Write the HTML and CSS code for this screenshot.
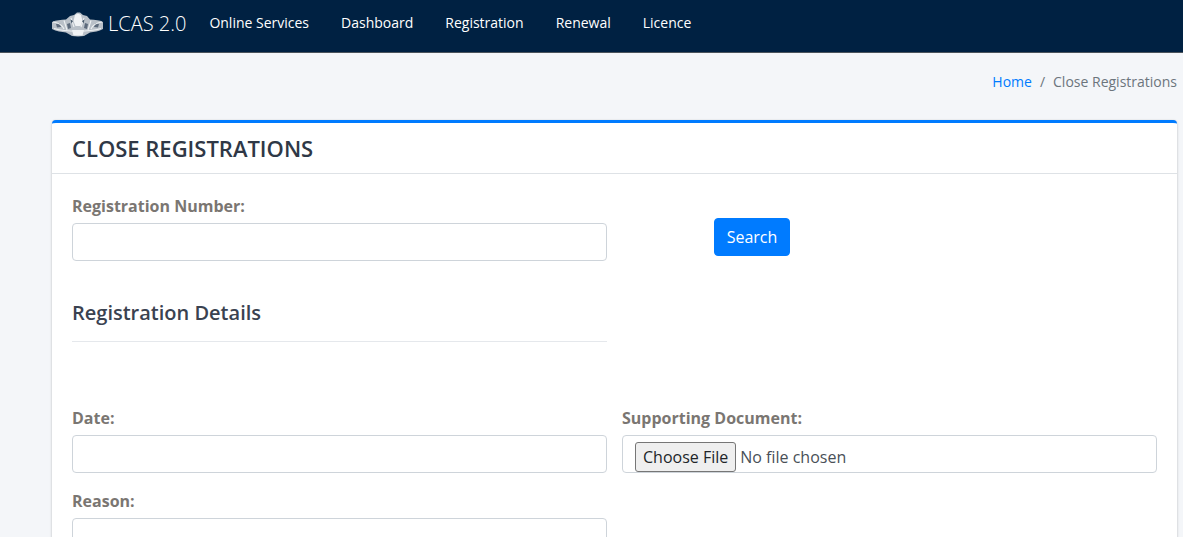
FILE: index.html
```html
<!DOCTYPE html>
<html lang="en">
<head>
<meta charset="utf-8">
<title>Close Registrations</title>
<link rel="stylesheet" href="styles.css">
</head>
<body>
<nav class="navbar">
  <a class="brand" href="#">
    <svg class="logo" width="52" height="26" viewBox="0 0 52 26" aria-hidden="true">
      <defs><filter id="soft" x="-5%" y="-5%" width="110%" height="110%"><feGaussianBlur stdDeviation="0.5"/></filter></defs>
      <g filter="url(#soft)">
        <path d="M0 10 C4 8 9 8 14 7.500 L18 4 L22 3 L25 .5 L28 .5 L31 3 L35 4 L38 7.500 C43 8 48 8 51 10 L51 17 C47 19.500 42 20 38 20.500 L32 24 L26 24.500 L20 24 L14 20.500 C10 20 4 19.500 0 17 Z" fill="#b9c0c8"/>
        <path d="M4 12 L8 11.500 L9 15 L5 15.500 Z M43 11.500 L47 12 L46 15.500 L42 15 Z M15 12 L18 11 L19 16 L16 17 Z M33 11 L36 12 L35 17 L32 16 Z" fill="#5d6b7c"/>
        <path d="M23 3 L26 1.500 L29 3 L30.500 9 L28.500 14 L23.500 14 L21.500 9 Z M20 18 L32 18 L30.500 23.500 L21.500 23.500 Z" fill="#f1f3f5"/>
        <path d="M1 10 C5 10.500 10 12 12 17 M50 10 C46 10.500 41 12 39 17 M12 8.500 L15 18 M39 8.500 L36 18 M19 6 L22 15 M32 6 L29 15 M2 16.500 C14 20 37 20 49 16.500" stroke="#eef1f3" stroke-width="1.100" fill="none"/>
        <path d="M18.500 7.500 L21 9 L19.500 11.500 Z M32.500 7.500 L30 9 L31.500 11.500 Z" fill="#46576a"/>
      </g>
    </svg>
    <span class="brand-text">LCAS 2.0</span>
  </a>
  <ul class="nav-links">
    <li><a href="#">Online Services</a></li>
    <li><a href="#">Dashboard</a></li>
    <li><a href="#">Registration</a></li>
    <li><a href="#">Renewal</a></li>
    <li><a href="#">Licence</a></li>
  </ul>
</nav>
<main class="content">
  <ol class="breadcrumb">
    <li><a href="#">Home</a></li>
    <li class="sep">/</li>
    <li class="current">Close Registrations</li>
  </ol>
  <section class="card">
    <header class="card-header"><h1>CLOSE REGISTRATIONS</h1></header>
    <div class="card-body">
      <div class="row row-search">
        <div class="field">
          <label for="regno">Registration Number:</label>
          <input id="regno" class="control" type="text">
        </div>
        <div class="search-cell"><button class="btn" type="button">Search</button></div>
      </div>
      <div class="row">
        <div class="details">
          <h2>Registration Details</h2>
          <hr>
        </div>
      </div>
      <div class="row row-date">
        <div class="field">
          <label for="date">Date:</label>
          <input id="date" class="control" type="text">
        </div>
        <div class="field">
          <label for="doc">Supporting Document:</label>
          <input id="doc" class="control file" type="file">
        </div>
      </div>
      <div class="row row-reason">
        <div class="field">
          <label for="reason">Reason:</label>
          <input id="reason" class="control" type="text">
        </div>
      </div>
    </div>
  </section>
</main>
</body>
</html>
```
FILE: styles.css
```css
* { box-sizing: border-box; }
html, body { height: 537px; overflow: hidden; }
body {
  margin: 0;
  background: #f4f6f9;
  font-family: "Open Sans", sans-serif;
  font-size: 16px;
  color: #212529;
}
a { text-decoration: none; }
.navbar {
  height: 53px;
  background: #002142;
  border-bottom: 1px solid #4b545c;
  display: flex;
  align-items: flex-start;
  padding-left: 52px;
}
.brand { display: flex; align-items: center; height: 50px; color: #fff; }
.logo { display: block; margin-right: 4px; }
.brand-text { font-size: 20px; font-weight: 300; line-height: 30px; color: #fff; margin-bottom: 2px; }
.nav-links { display: flex; list-style: none; margin: 0 0 0 7px; padding: 0; }
.nav-links a {
  display: block;
  padding: 0 16px;
  font-size: 14px;
  font-weight: 500;
  line-height: 46px;
  color: #fff;
}
.content { padding-left: 52px; padding-right: 6px; }
.breadcrumb {
  display: flex;
  justify-content: flex-end;
  list-style: none;
  margin: 0;
  padding: 18px 0 0;
  height: 67px;
  font-size: 14px;
  line-height: 21px;
}
.breadcrumb a { color: #007bff; }
.breadcrumb .sep { padding: 0 8px; color: #6c757d; }
.breadcrumb .current { color: #6c757d; }
.card {
  background: #fff;
  border-top: 3px solid #007bff;
  border-radius: 4px;
  box-shadow: 0 0 1px rgba(0,0,0,.13), 0 1px 3px rgba(0,0,0,.2);
}
.card-header {
  height: 51px;
  padding: 0 20px;
  border-bottom: 1px solid #dee2e6;
}
h1 {
  margin: 0;
  font-size: 22px;
  font-weight: 600;
  line-height: 51px;
  color: #2f3846;
}
.card-body { padding: 20px 20px 0; }
.row { display: grid; grid-template-columns: 535px 535px; column-gap: 15px; }
label {
  display: block;
  margin-bottom: 5px;
  font-size: 16px;
  font-weight: 700;
  line-height: 24px;
  color: #7a7672;
}
.control {
  display: block;
  width: 100%;
  height: 38px;
  padding: 6px 12px;
  background: #fff;
  border: 1px solid #ced4da;
  border-radius: 4px;
  font-family: inherit;
  font-size: 16px;
  color: #495057;
}
.file { padding-bottom: 0; }
.file::file-selector-button {
  height: 30px;
  font-family: inherit;
  font-size: 16px;
  color: #212529;
  background: #efefef;
  border: 1px solid #767676;
  border-radius: 3px;
  padding: 1px 7px;
  margin-right: 4px;
}
.search-cell { padding: 24px 0 0 92px; }
.btn {
  display: block;
  width: 76px;
  height: 38px;
  background: #007bff;
  border: 1px solid #007bff;
  border-radius: 4px;
  color: #fff;
  font-family: inherit;
  font-size: 16px;
  padding: 0;
}
.details { padding-top: 37px; }
h2 {
  margin: 0;
  font-size: 20px;
  font-weight: 600;
  line-height: 30px;
  color: #3a4250;
}
hr { margin: 13px 0 0; border: 0; border-top: 1px solid #e5e8ec; }
.row-date { margin-top: 64px; }
.row-reason { margin-top: 16px; }
```
